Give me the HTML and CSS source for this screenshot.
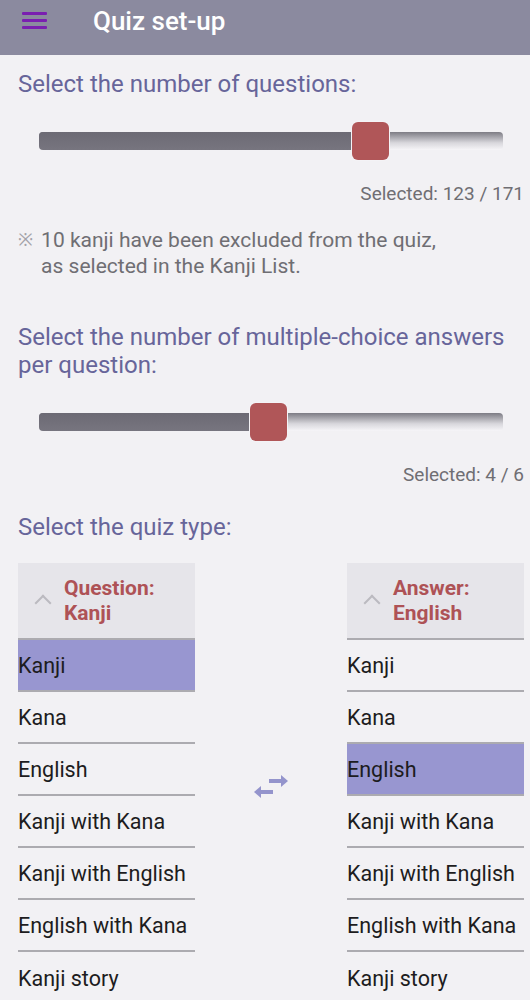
FILE: index.html
```html
<!DOCTYPE html>
<html lang="en">
<head>
  <meta charset="UTF-8" />
  <meta name="viewport" content="width=device-width, initial-scale=1.0" />
  <title>Quiz set-up</title>
  <link rel="stylesheet" href="styles.css">
</head>
<body>
  <header class="topbar">
    <button class="menu-btn" aria-label="Menu">
      <span></span><span></span><span></span>
    </button>
    <h1>Quiz set-up</h1>
  </header>

  <main class="content">
    <h2 class="prompt first">Select the number of questions:</h2>
    <div class="slider">
      <div class="track">
        <div class="fill" style="width: 67.5%;"></div>
      </div>
      <div class="thumb" style="left: 67.4%;"></div>
    </div>
    <p class="selected">Selected: 123 / 171</p>

    <p class="note"><span class="mark">※</span><span>10 kanji have been excluded from the quiz,<br>as selected in the Kanji List.</span></p>

    <h2 class="prompt second">Select the number of multiple-choice answers per question:</h2>
    <div class="slider">
      <div class="track">
        <div class="fill" style="width: 46%;"></div>
      </div>
      <div class="thumb" style="left: 45.5%;"></div>
    </div>
    <p class="selected">Selected: 4 / 6</p>

    <h2 class="prompt third">Select the quiz type:</h2>

    <div class="quiz-type">
      <div class="picker">
        <div class="picker-head">
          <span class="chevron"></span>
          <span>Question:<br>Kanji</span>
        </div>
        <ul class="options">
          <li class="active">Kanji</li>
          <li>Kana</li>
          <li>English</li>
          <li>Kanji with Kana</li>
          <li>Kanji with English</li>
          <li>English with Kana</li>
          <li>Kanji story</li>
        </ul>
      </div>

      <div class="swap">
        <svg width="36" height="30" viewBox="0 0 36 30">
          <path d="M16 10 H30" stroke="#9494cc" stroke-width="4" fill="none"/>
          <path d="M28 4 L35 10 L28 16 Z" fill="#9494cc"/>
          <path d="M20 21 H6" stroke="#9494cc" stroke-width="4" fill="none"/>
          <path d="M8 15 L1 21 L8 27 Z" fill="#9494cc"/>
        </svg>
      </div>

      <div class="picker">
        <div class="picker-head">
          <span class="chevron"></span>
          <span>Answer:<br>English</span>
        </div>
        <ul class="options">
          <li>Kanji</li>
          <li>Kana</li>
          <li class="active">English</li>
          <li>Kanji with Kana</li>
          <li>Kanji with English</li>
          <li>English with Kana</li>
          <li>Kanji story</li>
        </ul>
      </div>
    </div>
  </main>
</body>
</html>
```

FILE: styles.css
```css
:root {
  font-family: Roboto, "Noto Sans", sans-serif;
  --bar: #8b8a9f;
  --background: #f2f1f4;
  --prompt: #67659a;
  --muted: #6f6e73;
  --accent: #ae5256;
  --highlight: #9896d0;
  --line: #acabb0;
}
body {
  margin: 0;
  background: var(--background);
  color: #1d1c20;
  overflow: hidden;
}
.topbar {
  height: 55px;
  background: var(--bar);
  display: flex;
  align-items: center;
  box-sizing: border-box;
  padding: 0 0 14px 22px;
}
.menu-btn {
  background: none;
  border: none;
  padding: 0;
  width: 25px;
  display: flex;
  flex-direction: column;
  gap: 4px;
}
.menu-btn span {
  display: block;
  height: 3px;
  background: #7a1fb0;
  border-radius: 1px;
}
.topbar h1 {
  margin: 0 0 0 46px;
  color: #fff;
  font-size: 26px;
  font-weight: 500;
}

.content {
  padding: 0 6px 0 18px;
}
.prompt {
  margin: 0;
  font-size: 24px;
  font-weight: 400;
  line-height: 28px;
  color: var(--prompt);
}
.prompt.first { margin-top: 15px; }
.prompt.second { margin-top: 44px; }
.prompt.third { margin-top: 27px; }

.slider {
  position: relative;
  height: 38px;
  margin: 24px 21px 0 21px;
  display: flex;
  align-items: center;
}
.track {
  flex: 1;
  height: 18px;
  border-radius: 4px;
  background: linear-gradient(#7d7c84, #d8d7dc 60%, #f6f5f8);
  overflow: hidden;
}
.fill {
  height: 100%;
  background: linear-gradient(#6c6a74, #77757f);
}
.thumb {
  position: absolute;
  top: 0;
  width: 37px;
  height: 38px;
  border-radius: 6px;
  background: #b05658;
  box-shadow: 0 0 0 1px #f4f3f6;
}
.selected {
  margin: 23px 0 0;
  text-align: right;
  font-size: 19px;
  line-height: 22px;
  color: var(--muted);
}
.note {
  margin: 22px 0 0;
  display: flex;
  gap: 8px;
  font-size: 21px;
  line-height: 26px;
  color: var(--muted);
}
.note .mark {
  color: #a3a2a8;
  font-size: 18px;
}

.quiz-type {
  margin-top: 22px;
  display: grid;
  grid-template-columns: 177px 1fr 177px;
}
.picker-head {
  height: 77px;
  box-sizing: border-box;
  background: #e6e5ea;
  border-bottom: 2px solid var(--line);
  display: flex;
  align-items: center;
  gap: 15px;
  padding-left: 19px;
  color: var(--accent);
  font-size: 21px;
  font-weight: 700;
  line-height: 25px;
}
.chevron {
  width: 10px;
  height: 10px;
  border-left: 2px solid #bbbac0;
  border-top: 2px solid #bbbac0;
  transform: rotate(45deg);
  margin-top: 5px;
}
.options {
  list-style: none;
  margin: 0;
  padding: 0;
}
.options li {
  height: 52px;
  box-sizing: border-box;
  border-bottom: 2px solid var(--line);
  display: flex;
  align-items: center;
  font-size: 21.5px;
}
.options li:last-child {
  border-bottom: none;
}
.options li.active {
  background: var(--highlight);
}
.swap {
  display: flex;
  justify-content: center;
  align-items: center;
  margin-top: 208px;
  height: 30px;
}
```
